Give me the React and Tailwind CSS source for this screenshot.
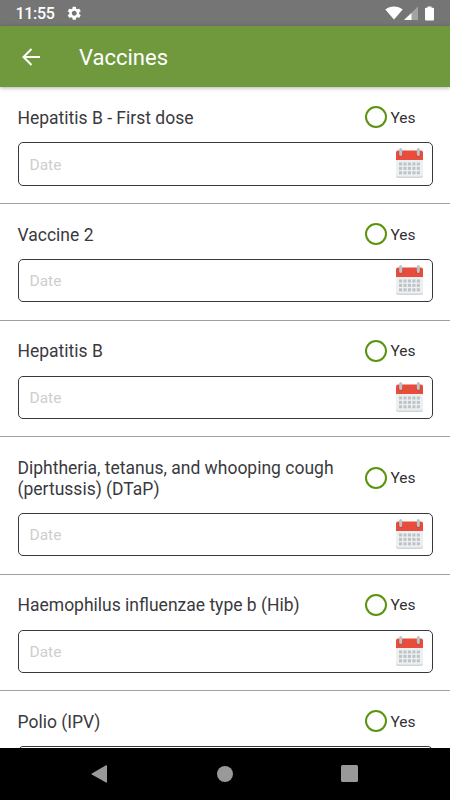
import { MdSettings } from "react-icons/md";

const vaccines = [
  { id: 1, name: "Hepatitis B - First dose" },
  { id: 2, name: "Vaccine 2" },
  { id: 3, name: "Hepatitis B" },
  { id: 4, name: "Diphtheria, tetanus, and whooping cough (pertussis) (DTaP)" },
  { id: 5, name: "Haemophilus influenzae type b (Hib)" },
  { id: 6, name: "Polio (IPV)" },
];

const CalendarIcon = () => (
  <svg width="27" height="31" viewBox="0 0 27 31" className="shrink-0">
    <path d="M0 11h27v16.5a2.5 2.5 0 0 1-2.5 2.5h-22A2.5 2.5 0 0 1 0 27.5z" fill="#d0d5d9" />
    <path d="M0 11h27v15a2.5 2.5 0 0 1-2.5 2.5h-22A2.5 2.5 0 0 1 0 26z" fill="#ecf0f1" />
    <path d="M2 2.6h23a2 2 0 0 1 2 2V12H0V4.6a2 2 0 0 1 2-2z" fill="#e74c3c" />
    <circle cx="4.7" cy="6.6" r="2.4" fill="#c9453a" />
    <circle cx="22.3" cy="6.6" r="2.4" fill="#c9453a" />
    <rect x="3.2" y="0" width="3" height="8" rx="1.5" fill="#bdc3c7" />
    <rect x="20.8" y="0" width="3" height="8" rx="1.5" fill="#bdc3c7" />
    {[14.5, 18.9, 23.3].map((y) =>
      [3, 7.45, 11.9, 16.35, 20.8].map((x) => (
        <rect key={`${x}-${y}`} x={x} y={y} width="3.1" height="3" fill="#bdc3c7" />
      ))
    )}
  </svg>
);

const StatusBar = () => (
  <div className="flex h-[26px] shrink-0 items-center bg-[#757575] pl-[15.5px] pr-4 text-white">
    <span className="mt-[2px] text-[16px] font-medium leading-none tracking-[-0.3px]">11:55</span>
    <MdSettings className="ml-[11px] size-[16.5px]" />
    <div className="ml-auto flex items-center">
      <svg width="18" height="14" viewBox="0 0 18 14">
        <path d="M0.3 3.5C5 -0.6 13 -0.6 17.7 3.5L9 13.5z" fill="#fff" />
      </svg>
      <svg width="14" height="14" viewBox="0 0 14 14" className="ml-[1.5px]">
        <path d="M14 0.5V14H0z" fill="#a3a3a3" />
        <path d="M7.5 7V14H0z" fill="#fff" />
      </svg>
      <svg width="9" height="15" viewBox="0 0 9 15" className="ml-[7px]">
        <path d="M2.5 0.5h4v1.2H8a1 1 0 0 1 1 1V13.5a1 1 0 0 1-1 1H1a1 1 0 0 1-1-1V2.7a1 1 0 0 1 1-1h1.5z" fill="#fff" />
      </svg>
    </div>
  </div>
);

const Header = () => (
  <header className="z-10 flex h-[61px] shrink-0 items-center bg-[#70993d] pl-[22px] text-white shadow-[0_1px_4px_rgba(0,0,0,0.3)]">
    <svg width="18" height="18" viewBox="0 0 18 18" fill="none" stroke="#fff" strokeWidth="2">
      <path d="M18 9H1.5M9.5 1L1.5 9l8 8" />
    </svg>
    <h1 className="ml-[39px] mt-[2px] text-[22px] leading-none">Vaccines</h1>
  </header>
);

const VaccineRow = ({ name }) => (
  <div className="shrink-0 border-b border-[#a0a0a0] px-[17.5px] pb-[17.25px] pt-[20.75px]">
    <div className="flex items-center justify-between">
      <p className="w-[335px] text-[17.5px] leading-[20.5px] text-[#3a3a3e]">{name}</p>
      <label className="-my-2 flex w-[68px] items-center">
        <span className="-mt-[2px] size-[22px] rounded-full border-2 border-[#5c930f]" />
        <span className="ml-[4px] mt-px text-[15.5px] leading-none text-[#303033]">Yes</span>
      </label>
    </div>
    <div className="mt-[13.75px] flex h-[43.5px] items-center justify-between rounded-[5px] border border-[#38383c] pl-[11px] pr-[9px]">
      <span className="mt-[3px] text-[15.5px] leading-none text-[#cecece]">Date</span>
      <CalendarIcon />
    </div>
  </div>
);

const NavBar = () => (
  <nav className="grid h-[52px] shrink-0 grid-cols-[198px_53px_196px] items-center justify-items-center bg-black pb-px">
    <svg width="16" height="18" viewBox="0 0 16 18" fill="#999">
      <path d="M15 0.3Q16 0 16 1V17Q16 18 15 17.6L0.8 9.6Q0 9 0.8 8.4z" />
    </svg>
    <span className="size-4 rounded-full bg-[#999]" />
    <span className="size-[17px] rounded-[1.5px] bg-[#999]" />
  </nav>
);

const App = () => {
  return (
    <div className="flex h-[800px] w-[450px] flex-col overflow-hidden bg-white font-['Roboto',sans-serif]">
      <StatusBar />
      <Header />
      <main className="flex min-h-0 flex-1 flex-col overflow-hidden">
        {vaccines.map((vaccine) => (
          <VaccineRow key={vaccine.id} name={vaccine.name} />
        ))}
      </main>
      <NavBar />
    </div>
  );
};

export default App;
